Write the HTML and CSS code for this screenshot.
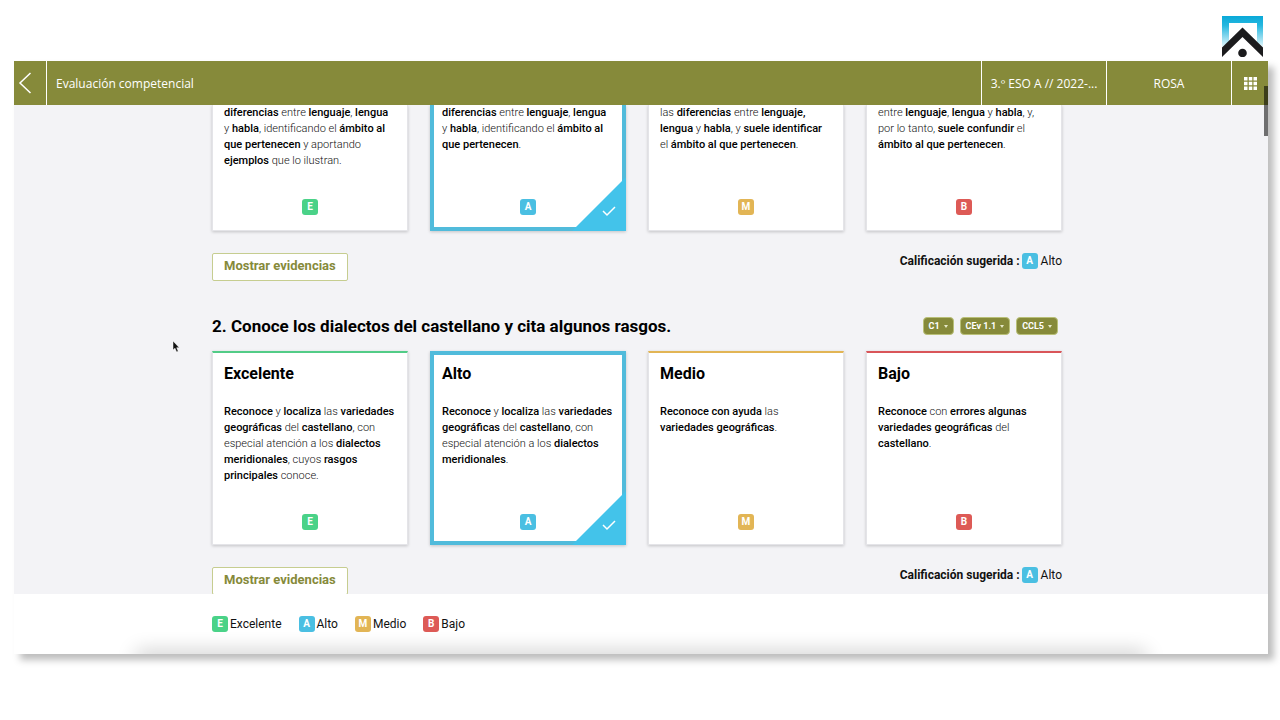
FILE: index.html
```html
<!DOCTYPE html>
<html lang="es">
<head>
  <meta charset="UTF-8" />
  <meta name="viewport" content="width=device-width, initial-scale=1.0"/>
  <title>Evaluación competencial</title>
  <link rel="stylesheet" href="styles.css">
</head>
<body>

  <!-- Logo -->
  <svg class="logo" viewBox="0 0 41 41" role="img" aria-label="Logo">
    <defs>
      <linearGradient id="sky" x1="0" y1="0" x2="0" y2="1">
        <stop offset="0" stop-color="#0aa9d8"/>
        <stop offset="0.3" stop-color="#25b7df"/>
        <stop offset="1" stop-color="#e4f6fb"/>
      </linearGradient>
    </defs>
    <path d="M0 0H41V31L35 26V7H7V26L0 31Z" fill="url(#sky)"/>
    <path d="M20.500 11.500L41 31.500V41L20.500 21L0 41V31.500Z" fill="#1b1b1d"/>
    <circle cx="20.500" cy="37" r="4.300" fill="#1b1b1d"/>
  </svg>

  <div class="window">
    <!-- Top bar -->
    <header class="topbar">
      <button class="back" aria-label="Volver">
        <svg width="14" height="24" viewBox="0 0 14 24"><path d="M12.500 2L2 12L12.500 22" fill="none" stroke="#fff" stroke-width="1.500"/></svg>
      </button>
      <h1 class="topbar-title">Evaluación competencial</h1>
      <button class="topbar-cell">3.º ESO A // 2022-...</button>
      <button class="topbar-cell">ROSA</button>
      <button class="apps" aria-label="Aplicaciones">
        <svg width="13" height="13" viewBox="0 0 13 13" fill="#fff">
          <path d="M0 0h3.500v3.500H0zM4.800 0h3.500v3.500H4.800zM9.500 0H13v3.500H9.500zM0 4.800h3.500v3.500H0zM4.800 4.800h3.500v3.500H4.800zM9.500 4.800H13v3.500H9.500zM0 9.500h3.500V13H0zM4.800 9.500h3.500V13H4.800zM9.500 9.500H13V13H9.500z"/>
        </svg>
      </button>
    </header>

    <!-- Rubrics -->
    <main class="content">
      <section class="rubric">
        <div class="cards cards-cut">
          <article class="card excelente">
            <p><b>diferencias</b> entre <b>lenguaje</b>, <b>lengua</b><br>y <b>habla</b>, identificando el <b>ámbito al<br>que pertenecen</b> y aportando<br><b>ejemplos</b> que lo ilustran.</p>
            <span class="badge badge-e">E</span>
          </article>
          <article class="card alto selected">
            <p><b>diferencias</b> entre <b>lenguaje</b>, <b>lengua</b><br>y <b>habla</b>, identificando el <b>ámbito al<br>que pertenecen</b>.</p>
            <span class="badge badge-a">A</span>
            <svg class="corner" viewBox="0 0 54 54"><path d="M54 0V54H0Z" fill="#43c3ea"/><path d="M31 34L35 38L43 30" fill="none" stroke="#fff" stroke-width="1.500"/></svg>
          </article>
          <article class="card medio">
            <p>las <b>diferencias</b> entre <b>lenguaje,<br>lengua</b> y <b>habla</b>, y <b>suele identificar</b><br>el <b>ámbito al que pertenecen</b>.</p>
            <span class="badge badge-m">M</span>
          </article>
          <article class="card bajo">
            <p>entre <b>lenguaje</b>, <b>lengua</b> y <b>habla</b>, y,<br>por lo tanto, <b>suele confundir</b> el<br><b>ámbito al que pertenecen</b>.</p>
            <span class="badge badge-b">B</span>
          </article>
        </div>
        <div class="actions">
          <button class="evidence-btn">Mostrar evidencias</button>
          <div class="suggested"><strong>Calificación sugerida :</strong><span class="badge badge-a">A</span><span class="grade">Alto</span></div>
        </div>
      </section>

      <section class="rubric">
        <div class="rubric-header">
          <h2>2. Conoce los dialectos del castellano y cita algunos rasgos.</h2>
          <div class="chips">
            <button class="chip">C1</button>
            <button class="chip">CEv 1.1</button>
            <button class="chip">CCL5</button>
          </div>
        </div>
        <div class="cards">
          <article class="card excelente">
            <h3>Excelente</h3>
            <p><b>Reconoce</b> y <b>localiza</b> las <b>variedades<br>geográficas</b> del <b>castellano</b>, con<br>especial atención a los <b>dialectos<br>meridionales</b>, cuyos <b>rasgos<br>principales</b> conoce.</p>
            <span class="badge badge-e">E</span>
          </article>
          <article class="card alto selected">
            <h3>Alto</h3>
            <p><b>Reconoce</b> y <b>localiza</b> las <b>variedades<br>geográficas</b> del <b>castellano</b>, con<br>especial atención a los <b>dialectos<br>meridionales</b>.</p>
            <span class="badge badge-a">A</span>
            <svg class="corner" viewBox="0 0 54 54"><path d="M54 0V54H0Z" fill="#43c3ea"/><path d="M31 34L35 38L43 30" fill="none" stroke="#fff" stroke-width="1.500"/></svg>
          </article>
          <article class="card medio">
            <h3>Medio</h3>
            <p><b>Reconoce con ayuda</b> las<br><b>variedades geográficas</b>.</p>
            <span class="badge badge-m">M</span>
          </article>
          <article class="card bajo">
            <h3>Bajo</h3>
            <p><b>Reconoce</b> con <b>errores algunas<br>variedades geográficas</b> del<br><b>castellano</b>.</p>
            <span class="badge badge-b">B</span>
          </article>
        </div>
        <div class="actions">
          <button class="evidence-btn">Mostrar evidencias</button>
          <div class="suggested"><strong>Calificación sugerida :</strong><span class="badge badge-a">A</span><span class="grade">Alto</span></div>
        </div>
      </section>
    </main>

    <!-- Legend -->
    <footer class="footer">
      <ul class="legend">
        <li><span class="badge badge-e">E</span>Excelente</li>
        <li><span class="badge badge-a">A</span>Alto</li>
        <li><span class="badge badge-m">M</span>Medio</li>
        <li><span class="badge badge-b">B</span>Bajo</li>
      </ul>
    </footer>

    <div class="scroll-thumb"></div>
  </div>

  <svg class="pointer" width="8" height="13" viewBox="0 0 8 13"><path d="M1 1V10L3 8.200L4.600 12L6.200 11.300L4.700 7.700H7.300Z" fill="#111" stroke="#fff" stroke-width="0.500"/></svg>

</body>
</html>
```
FILE: styles.css
```css
* { box-sizing: border-box; }
body { margin: 0; padding: 16px 12px 66px 14px; height: 100vh; display: flex; flex-direction: column; background: #fff; color: #111; font-family: Roboto, "Liberation Sans", sans-serif; }
h1, h2, h3, p, ul { margin: 0; padding: 0; }
button { font-family: inherit; cursor: pointer; }

.logo { width: 41px; height: 41px; flex: none; align-self: flex-end; margin: 0 5px 4px 0; }
.window { position: relative; flex: 1; min-height: 0; display: flex; flex-direction: column; box-shadow: 6px 6px 7px rgba(0,0,0,0.26); }

.topbar { flex: none; display: flex; height: 44px; background: #868a3a; color: #fff; font-family: "Open Sans", "Noto Sans", sans-serif; }
.topbar button { border: none; background: none; color: inherit; font-family: inherit; font-size: 12px; padding: 0; }
.topbar .back { width: 32px; display: flex; align-items: center; padding-left: 4px; }
.topbar-title { flex: 1; border-left: 1px solid #fff; padding: 2px 0 0 9px; font-size: 12px; font-weight: 400; line-height: 42px; }
.topbar .topbar-cell { width: 125px; border-left: 1px solid #fff; }
.topbar .apps { width: 37px; display: flex; align-items: center; justify-content: center; border-left: 1px solid #fff; }

.content { flex: 1; min-height: 0; overflow: hidden; background: #f3f3f6; padding-right: 8px; }
.rubric { max-width: 850px; margin: 0 auto 35px; }
.rubric-header { display: flex; justify-content: space-between; align-items: center; height: 20px; margin-bottom: 15px; padding-right: 4px; }
.rubric-header h2 { font-size: 17px; line-height: 20px; color: #000; }
.chips { display: flex; gap: 6px; }
.chip { display: flex; align-items: center; gap: 4px; height: 18px; padding: 0 5px; border: 1px solid #b9c078; border-radius: 4px; background: #868a3a; color: #fff; font-size: 9px; font-weight: 700; }
.chip::after { content: ""; border: 2px solid transparent; border-top: 3px solid #e6e8c8; border-bottom: none; }

.cards { display: grid; grid-template-columns: repeat(4, 1fr); gap: 22px; }
.card { position: relative; display: flex; flex-direction: column; min-height: 194px; padding: 11px 11px 14px; border: 1px solid #e4e4e8; border-top: 2px solid; background: #fff; box-shadow: 0 1px 3px rgba(0,0,0,0.2); }
.card h3 { font-size: 16px; line-height: 20px; margin-bottom: 20px; color: #000; }
.card p { font-size: 11px; line-height: 16px; font-weight: 300; color: #111; white-space: nowrap; }
.card b { font-weight: 500; color: #000; }
.card .badge { margin: auto auto 0; }
.card.excelente { border-top-color: #52cc87; }
.card.medio { border-top-color: #e2b555; }
.card.bajo { border-top-color: #d95559; }
.card.selected { border: 4px solid #51bbdb; padding: 9px 8px 11px; }
.cards-cut .card { min-height: 126px; padding-top: 0; padding-bottom: 15px; border-top: none; }
.cards-cut .card.selected { border-top: none; padding-top: 0; padding-bottom: 12px; }
.corner { position: absolute; right: -4px; bottom: -4px; width: 54px; height: 54px; }

.badge { display: inline-flex; align-items: center; justify-content: center; width: 16px; height: 16px; border-radius: 3px; color: #fff; font-size: 10px; line-height: 16px; font-weight: 700; }
.badge-e { background: #4ad288; }
.badge-a { background: #4abfe2; }
.badge-m { background: #e2b555; }
.badge-b { background: #dd5a56; }

.actions { display: flex; justify-content: space-between; align-items: flex-start; margin-top: 22px; }
.evidence-btn { height: 28px; padding: 0 11px 3px; border: 1px solid #c6cd90; border-radius: 2px; background: #fff; color: #868a3a; font-size: 13px; font-weight: 700; }
.suggested { display: flex; align-items: center; font-size: 12px; line-height: 16px; }
.suggested .badge { margin: 0 3px 0 2px; }

.footer { position: relative; flex: none; height: 60px; background: #fff; padding-right: 8px; overflow: hidden; }
.footer::after { content: ""; position: absolute; left: 10%; right: 10%; top: 100%; height: 10px; box-shadow: 0 0 20px 3px rgba(0,0,0,0.2); }
.legend { list-style: none; display: flex; align-items: center; gap: 17px; max-width: 850px; height: 60px; margin: 0 auto; font-size: 12px; }
.legend li { display: flex; align-items: center; gap: 2px; }

.scroll-thumb { position: absolute; right: 0; top: 25px; width: 4px; height: 50px; background: rgba(0,0,0,0.55); }
.pointer { position: absolute; left: 172px; top: 340px; }
```
